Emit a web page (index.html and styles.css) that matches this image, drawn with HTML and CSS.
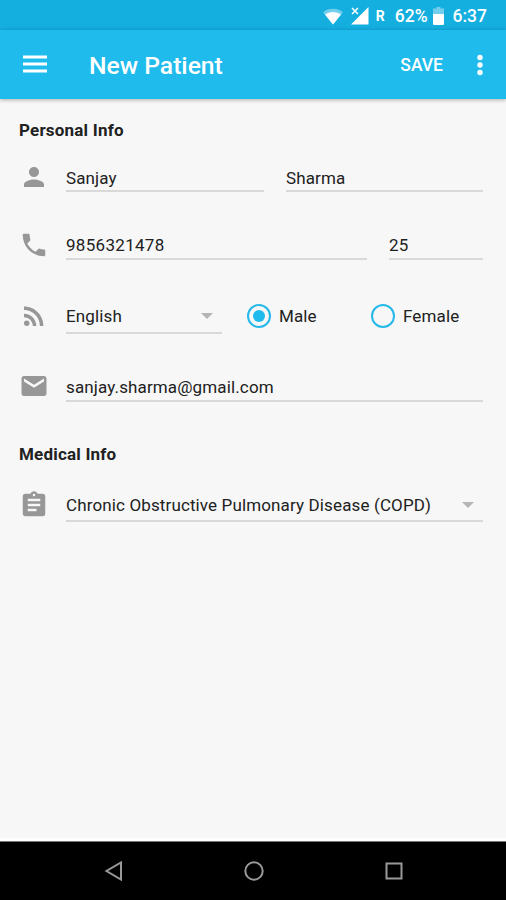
FILE: index.html
```
<!DOCTYPE html>
<html lang="en">
<head>
    <meta charset="UTF-8">
    <meta name="viewport" content="width=device-width, initial-scale=1.0">
    <title>New Patient</title>
    <link rel="stylesheet" href="styles.css">
</head>
<body>
    <div class="screen">
        <!-- Status bar -->
        <div class="status-bar">
            <svg class="wifi" width="20" height="17" viewBox="0 0 20 17">
                <path d="M0 4.2C5.6-.4 14.4-.4 20 4.2L10 16.6z" fill="#fff" opacity=".4"/>
                <path d="M2 6.600C6.800 3.200 13.200 3.200 18 6.600L10 16.600z" fill="#fff"/>
            </svg>
            <svg class="signal" width="18" height="18" viewBox="0 0 18 18">
                <path d="M17.500 0V17.500H0z" fill="#fff"/>
                <path d="M0 0H9V8H0z" fill="#14aedf"/>
                <path d="M1 1L7 7M7 1L1 7" stroke="#fff" stroke-width="1.500"/>
            </svg>
            <span class="roaming">R</span>
            <span class="percent">62%</span>
            <svg class="battery" width="11" height="18" viewBox="0 0 11 18">
                <path d="M3.500 0h4v1.500H11V8H0V1.500h3.500z" fill="#fff" opacity=".4"/>
                <path d="M0 7h11v10a1 1 0 0 1-1 1H1a1 1 0 0 1-1-1z" fill="#fff"/>
            </svg>
            <span class="clock">6:37</span>
        </div>

        <!-- Toolbar -->
        <div class="toolbar">
            <svg class="menu" width="24" height="18" viewBox="0 0 24 18">
                <path d="M0 .5h24v3H0zM0 7.500h24v3H0zM0 14.500h24v3H0z" fill="#fff"/>
            </svg>
            <h1>New Patient</h1>
            <span class="save">SAVE</span>
            <svg class="more" width="6" height="22" viewBox="0 0 6 22">
                <g fill="#fff"><circle cx="3" cy="3.500" r="2.700"/><circle cx="3" cy="11" r="2.700"/><circle cx="3" cy="18.500" r="2.700"/></g>
            </svg>
        </div>

        <div class="content">
            <h2>Personal Info</h2>

            <div class="row row-name">
                <svg class="icon" viewBox="0 0 24 24"><path d="M12 12c2.210 0 4-1.790 4-4s-1.790-4-4-4-4 1.790-4 4 1.790 4 4 4zm0 2c-2.670 0-8 1.340-8 4v2h16v-2c0-2.660-5.330-4-8-4z"/></svg>
                <div class="field first-name">Sanjay</div>
                <div class="field last-name">Sharma</div>
            </div>

            <div class="row row-phone">
                <svg class="icon" viewBox="0 0 24 24"><path d="M6.620 10.790c1.440 2.830 3.760 5.140 6.590 6.590l2.200-2.200c.27-.27.67-.36 1.020-.24 1.120.37 2.330.57 3.570.57.55 0 1 .45 1 1V20c0 .55-.45 1-1 1-9.390 0-17-7.610-17-17 0-.55.45-1 1-1h3.500c.55 0 1 .45 1 1 0 1.250.2 2.450.57 3.570.11.35.03.74-.25 1.020l-2.200 2.200z"/></svg>
                <div class="field phone">9856321478</div>
                <div class="field age">25</div>
            </div>

            <div class="row row-language">
                <svg class="icon" viewBox="0 0 24 24"><circle cx="6.180" cy="17.820" r="2.180"/><path d="M4 4.440v2.830c7.030 0 12.730 5.700 12.730 12.730h2.830c0-8.590-6.970-15.560-15.560-15.560zm0 5.660v2.830c3.900 0 7.070 3.170 7.070 7.070h2.830c0-5.470-4.430-9.900-9.900-9.900z"/></svg>
                <div class="field select language"><span>English</span><i class="arrow"></i></div>
                <div class="option male"><span class="radio checked"></span>Male</div>
                <div class="option"><span class="radio"></span>Female</div>
            </div>

            <div class="row row-email">
                <svg class="icon" viewBox="0 0 24 24"><path d="M20 4H4c-1.100 0-1.990.9-1.990 2L2 18c0 1.100.9 2 2 2h16c1.100 0 2-.9 2-2V6c0-1.100-.9-2-2-2zm0 4.300l-8 5-8-5V6l8 5 8-5v2.300z"/></svg>
                <div class="field email">sanjay.sharma@gmail.com</div>
            </div>

            <h2 class="medical">Medical Info</h2>

            <div class="row row-disease">
                <svg class="icon" viewBox="0 0 24 24"><path d="M19 3h-4.180C14.400 1.840 13.300 1 12 1c-1.300 0-2.400.84-2.820 2H5c-1.100 0-2 .9-2 2v14c0 1.100.9 2 2 2h14c1.100 0 2-.9 2-2V5c0-1.100-.9-2-2-2zm-7 0c.55 0 1 .45 1 1s-.45 1-1 1-1-.45-1-1 .45-1 1-1zm2 14H7v-2h7v2zm3-4H7v-2h10v2zm0-4H7V7h10v2z"/></svg>
                <div class="field select disease"><span>Chronic Obstructive Pulmonary Disease (COPD)</span><i class="arrow"></i></div>
            </div>
        </div>

        <!-- Navigation bar -->
        <div class="nav-bar">
            <svg width="20" height="20" viewBox="0 0 20 20"><path d="M17 1.500v17L2.500 10z"/></svg>
            <svg width="20" height="20" viewBox="0 0 20 20"><circle cx="10" cy="10" r="8.700"/></svg>
            <svg width="20" height="20" viewBox="0 0 20 20"><path d="M2.500 2.500h15v15h-15z"/></svg>
        </div>
    </div>
</body>
</html>
```
FILE: styles.css
```
* {
    box-sizing: border-box;
}
body {
    margin: 0;
    font-family: Roboto, "Liberation Sans", sans-serif;
    background: #f7f7f7;
    color: #212121;
}
svg {
    display: block;
    flex: none;
}
.screen {
    display: flex;
    flex-direction: column;
    width: 506px;
    height: 900px;
    overflow: hidden;
}

/* Status bar */
.status-bar {
    display: flex;
    align-items: center;
    justify-content: flex-end;
    height: 30px;
    padding: 2px 19px 0 0;
    background: #14aedf;
    color: #fff;
    font-size: 17.5px;
    font-weight: 500;
    flex: none;
}
.signal {
    margin-left: 8px;
}
.roaming {
    margin-left: 7px;
    font-size: 14px;
    font-weight: 700;
}
.percent {
    margin-left: 10px;
}
.battery {
    margin-left: 5px;
}
.clock {
    margin-left: 9px;
}

/* Toolbar */
.toolbar {
    display: flex;
    align-items: center;
    height: 69px;
    padding: 0 23px;
    background: #1ebbec;
    color: #fff;
    box-shadow: 0 1px 4px rgba(0,0,0,0.3);
    flex: none;
}
.toolbar .menu {
    margin-top: -1px;
}
.toolbar h1 {
    flex: 1;
    margin: 1px 0 0 42px;
    font-size: 24.7px;
    font-weight: 500;
}
.save {
    margin-top: 1px;
    margin-right: 34px;
    font-size: 17.5px;
    font-weight: 500;
}

/* Form */
.content {
    flex: 1;
    padding: 20px 23px 0 19px;
    border-bottom: 3px solid #fff;
}
.content h2 {
    margin: 0;
    font-size: 17px;
    line-height: 22px;
    font-weight: 700;
    letter-spacing: 0.2px;
}
.row {
    display: flex;
    align-items: center;
    height: 32px;
    font-size: 17px;
    letter-spacing: 0.13px;
}
.icon {
    width: 30px;
    height: 30px;
    margin-right: 17px;
    fill: #979797;
}
.field {
    height: 100%;
    padding-top: 7px;
    line-height: 22px;
    border-bottom: 2px solid #d9d9d9;
    white-space: nowrap;
}
.row-name {
    margin-top: 19px;
}
.row-name .icon,
.row-phone .icon {
    margin-top: 2px;
}
.first-name {
    width: 198px;
}
.last-name {
    width: 197px;
    margin-left: 22px;
}
.row-phone {
    margin-top: 36px;
}
.row-phone .field,
.row-email .field {
    padding-top: 6px;
}
.row-phone .field {
    letter-spacing: 0.3px;
}
.phone {
    width: 301px;
}
.age {
    width: 94px;
    margin-left: 22px;
}
.row-language {
    height: 36px;
    margin-top: 38px;
}
.language {
    width: 156px;
}
.select {
    display: flex;
    justify-content: space-between;
}
.arrow {
    width: 0;
    height: 0;
    margin: 8px 9px 0 0;
    border: 6px solid transparent;
    border-top-color: #b5b5b5;
    border-bottom: 0;
}
.option {
    display: flex;
    align-items: center;
}
.male {
    width: 124px;
    margin-left: 25px;
}
.radio {
    display: flex;
    align-items: center;
    justify-content: center;
    width: 24px;
    height: 24px;
    margin-right: 8px;
    border: 2px solid #25b9e9;
    border-radius: 50%;
}
.radio.checked::after {
    content: "";
    width: 12px;
    height: 12px;
    border-radius: 50%;
    background: #1ebbec;
}
.row-email {
    margin-top: 36px;
}
.email {
    flex: 1;
}
.content .medical {
    margin-top: 41px;
}
.row-disease {
    height: 35px;
    margin-top: 22px;
}
.disease {
    flex: 1;
}

/* Navigation bar */
.nav-bar {
    display: flex;
    align-items: center;
    justify-content: center;
    gap: 120px;
    height: 59px;
    padding-left: 1px;
    border-top: 1px solid #777;
    background: #000;
    flex: none;
}
.nav-bar svg {
    fill: none;
    stroke: #999;
    stroke-width: 2;
}
```
